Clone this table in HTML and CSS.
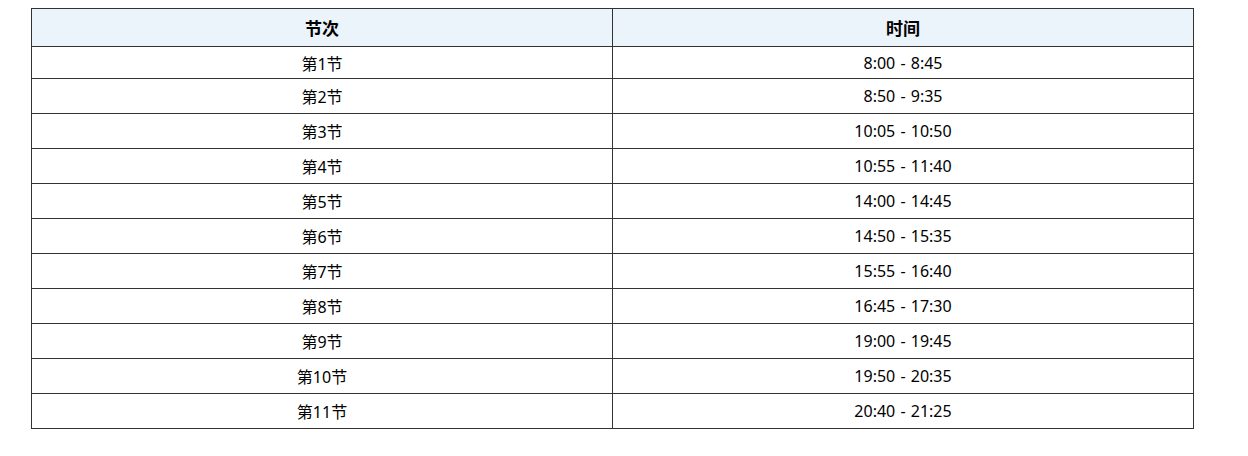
FILE: index.html
```html
<!DOCTYPE html>
<html lang="zh">
<head>
<meta charset="utf-8">
<link rel="stylesheet" href="styles.css">
</head>
<body>
<table class="schedule">
  <thead>
    <tr class="head-row"><th>节次</th><th>时间</th></tr>
  </thead>
  <tbody>
    <tr class="first-row"><td>第1节</td><td>8:00 - 8:45</td></tr>
    <tr><td>第2节</td><td>8:50 - 9:35</td></tr>
    <tr><td>第3节</td><td>10:05 - 10:50</td></tr>
    <tr><td>第4节</td><td>10:55 - 11:40</td></tr>
    <tr><td>第5节</td><td>14:00 - 14:45</td></tr>
    <tr><td>第6节</td><td>14:50 - 15:35</td></tr>
    <tr><td>第7节</td><td>15:55 - 16:40</td></tr>
    <tr><td>第8节</td><td>16:45 - 17:30</td></tr>
    <tr><td>第9节</td><td>19:00 - 19:45</td></tr>
    <tr><td>第10节</td><td>19:50 - 20:35</td></tr>
    <tr><td>第11节</td><td>20:40 - 21:25</td></tr>
  </tbody>
</table>
</body>
</html>
```
FILE: styles.css
```css
html, body {
  margin: 0;
  padding: 0;
  background: #fff;
}
body {
  padding: 8px 0 0 31px;
  font-family: "Noto Sans", "Noto Sans CJK SC", sans-serif;
  color: #000;
}
.schedule {
  border-collapse: collapse;
  width: 1163px;
  table-layout: fixed;
}
.schedule th,
.schedule td {
  border: 1px solid #333;
  text-align: center;
  padding: 0;
  font-size: 16px;
  word-spacing: 1px;
}
.schedule th {
  background: #ebf3fb;
  font-weight: bold;
  font-size: 17px;
  height: 37px;
}
.schedule td {
  height: 34px;
}
.schedule .first-row td {
  height: 31px;
}
```
